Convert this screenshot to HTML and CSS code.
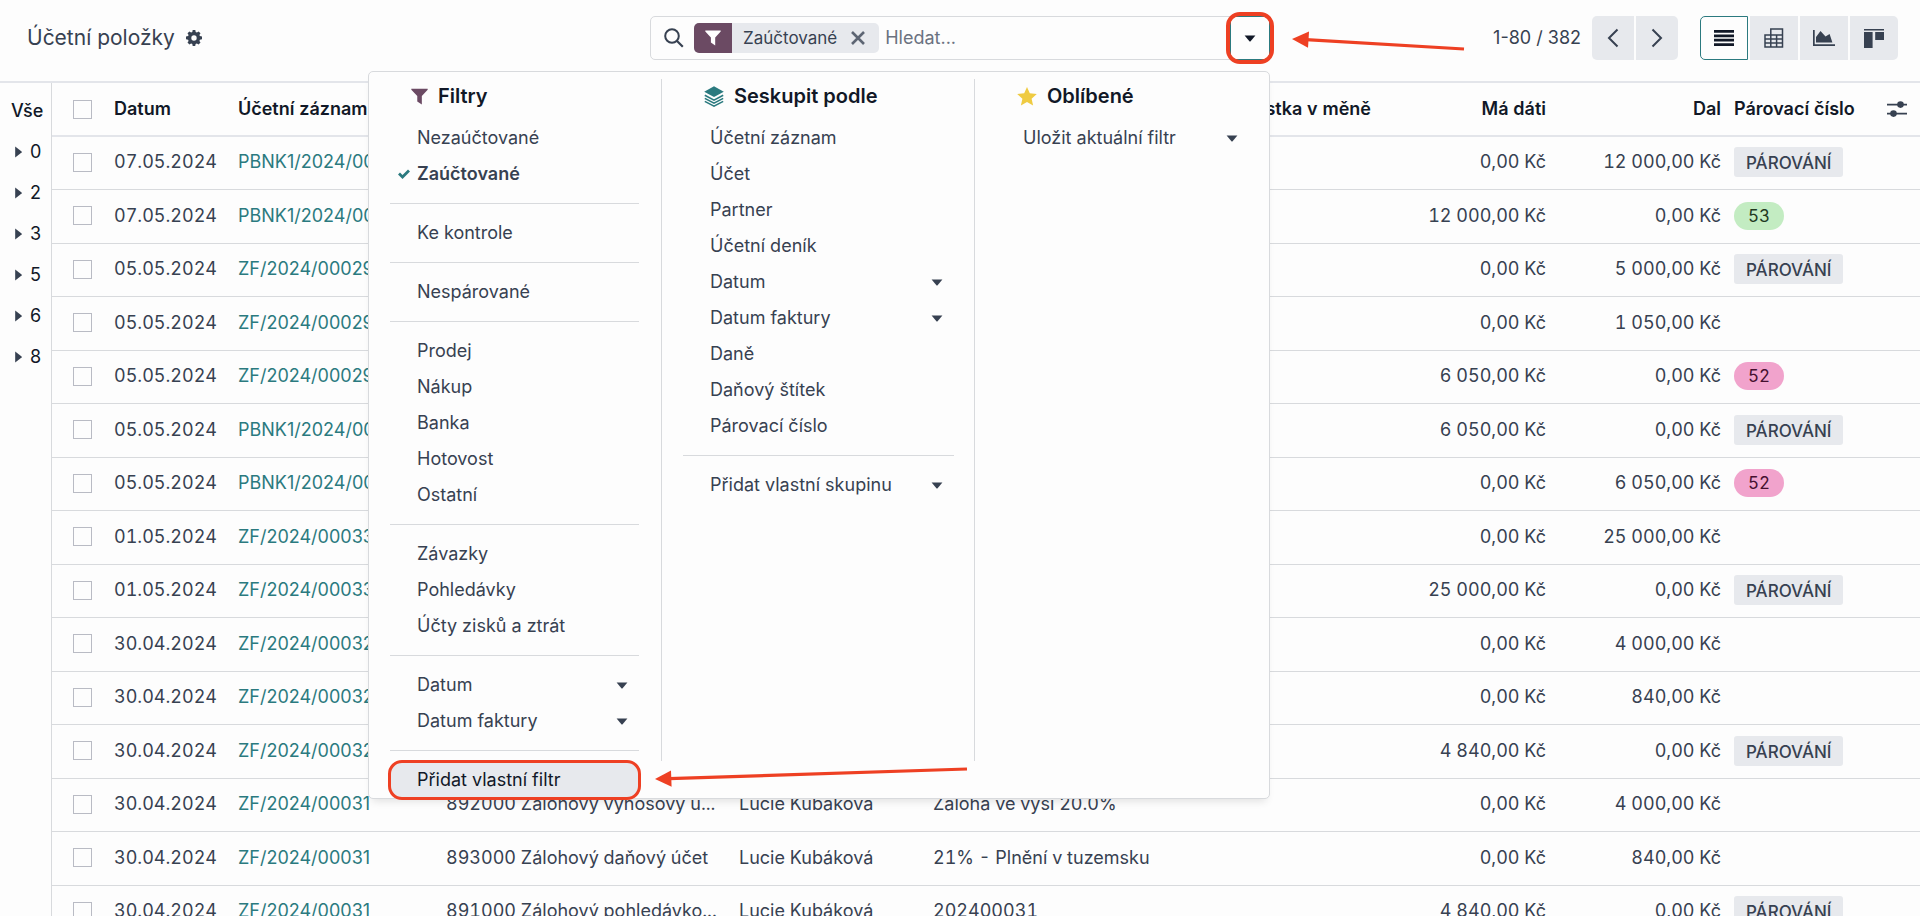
FILE: index.html
```html
<!DOCTYPE html>
<html lang="cs">
<head>
<meta charset="utf-8">
<title>Účetní položky</title>
<link rel="stylesheet" href="styles.css">
</head>
<body>
<svg class="sprite" aria-hidden="true">
  <symbol id="funnel" viewBox="0 0 16 16"><path d="M0.3 0.6H15.7V1.6L10.2 7.6V15.6L5.9 12.6V7.6L0.3 1.6Z" fill="currentColor"/></symbol>
  <symbol id="caret" viewBox="0 0 12 7"><path d="M0.6 0.4H11.4L6.6 6.2Q6 6.8 5.4 6.2Z" fill="currentColor"/></symbol>
  <symbol id="side-caret" viewBox="0 0 7 12"><path d="M0.2 0.4 6.6 5.6Q7 6 6.6 6.4L0.2 11.6Z" fill="currentColor"/></symbol>
</svg>
<header class="control-panel">
  <div class="title">
    <h1>Účetní položky</h1>
    <button class="plain" aria-label="Akce"><svg width="16" height="16" viewBox="0 0 16 16"><path fill="currentColor" fill-rule="evenodd" d="M6.7 0h2.6l.4 2 1.2.5L12.6 1.4l1.9 1.9-1.1 1.7.5 1.1 2.1.4v2.8l-2.1.4-.5 1.2 1.1 1.7-1.9 1.9-1.7-1.1-1.3.5-.4 2.1H6.7l-.4-2.1-1.2-.5-1.7 1.1-1.9-1.9 1.1-1.7-.5-1.2L0 9.3V6.5l2.1-.4.5-1.1-1.1-1.7 1.9-1.9 1.7 1.1L6.3 2ZM8 5.3a2.7 2.7 0 1 0 0 5.4 2.7 2.7 0 0 0 0-5.4Z"/></svg></button>
  </div>
  <div class="search-wrap">
    <div class="search">
      <svg class="magnifier" width="20" height="20" viewBox="0 0 20 20" fill="none" stroke="currentColor" stroke-width="2"><circle cx="8" cy="8" r="6.8"/><path d="M12.8 12.8 18.8 18.8" stroke-width="2.2"/></svg>
      <div class="facet">
        <span class="facet-icon"><svg width="16" height="16"><use href="#funnel"/></svg></span>
        <span class="facet-label">Zaúčtované</span>
        <button class="plain facet-remove" aria-label="Odstranit"><svg width="14" height="14" viewBox="0 0 14 14" stroke="currentColor" stroke-width="2.6"><path d="M1 1 13 13M13 1 1 13"/></svg></button>
      </div>
      <input type="text" placeholder="Hledat..." aria-label="Hledat">
      <button class="search-toggle" aria-label="Možnosti hledání" aria-expanded="true"><svg width="12" height="7"><use href="#caret"/></svg></button>
    </div>
    <svg class="arrow arrow-toggle" width="174" height="20" viewBox="0 0 174 20"><path d="M14 8.6 172 18" stroke="#ee4023" stroke-width="3.2"/><path d="M0 8 17 0.4 16 16.8Z" fill="#ee4023"/></svg>

    <div class="menu">
      <section class="menu-col">
        <h2><svg class="purple" width="17" height="17"><use href="#funnel"/></svg>Filtry</h2>
        <button class="item">Nezaúčtované</button>
        <button class="item selected"><svg class="check" width="12" height="10" viewBox="0 0 12 10" fill="none" stroke="currentColor" stroke-width="2.8"><path d="M1 4.6 4.5 8 11 1.4"/></svg>Zaúčtované</button>
        <hr>
        <button class="item">Ke kontrole</button>
        <hr>
        <button class="item">Nespárované</button>
        <hr>
        <button class="item">Prodej</button>
        <button class="item">Nákup</button>
        <button class="item">Banka</button>
        <button class="item">Hotovost</button>
        <button class="item">Ostatní</button>
        <hr>
        <button class="item">Závazky</button>
        <button class="item">Pohledávky</button>
        <button class="item">Účty zisků a ztrát</button>
        <hr>
        <button class="item">Datum<svg width="12" height="7"><use href="#caret"/></svg></button>
        <button class="item">Datum faktury<svg width="12" height="7"><use href="#caret"/></svg></button>
        <hr>
        <button class="item highlighted">Přidat vlastní filtr</button>
        <svg class="arrow arrow-filter" width="314" height="22" viewBox="0 0 314 22"><path d="M14 12.6 312 3" stroke="#ee4023" stroke-width="3.2"/><path d="M0 13 16 4.4 16.6 20.8Z" fill="#ee4023"/></svg>
      </section>
      <section class="menu-col">
        <h2><svg class="teal" width="20" height="21" viewBox="0 0 20 21"><path d="M10 0.3 19.8 5.7 10 11.1 0.2 5.7Z" fill="currentColor"/><path d="M0.8 9.2 10 14.2 19.2 9.2M0.8 12.4 10 17.2 19.2 12.4M0.8 15.4 10 20.1 19.2 15.4" fill="none" stroke="currentColor" stroke-width="1.6"/></svg>Seskupit podle</h2>
        <button class="item">Účetní záznam</button>
        <button class="item">Účet</button>
        <button class="item">Partner</button>
        <button class="item">Účetní deník</button>
        <button class="item">Datum<svg width="12" height="7"><use href="#caret"/></svg></button>
        <button class="item">Datum faktury<svg width="12" height="7"><use href="#caret"/></svg></button>
        <button class="item">Daně</button>
        <button class="item">Daňový štítek</button>
        <button class="item">Párovací číslo</button>
        <hr>
        <button class="item">Přidat vlastní skupinu<svg width="12" height="7"><use href="#caret"/></svg></button>
      </section>
      <section class="menu-col">
        <h2><svg class="gold" width="20" height="19" viewBox="0 0 20 19"><path d="M10 0 12.8 6.3 19.8 7.1 14.6 11.7 16.1 18.6 10 15.1 3.9 18.6 5.4 11.7 0.2 7.1 7.2 6.3Z" fill="currentColor"/></svg>Oblíbené</h2>
        <button class="item">Uložit aktuální filtr<svg width="12" height="7"><use href="#caret"/></svg></button>
      </section>
    </div>
  </div>
  <div class="tools">
    <span class="pager-text">1-80 / 382</span>
    <div class="group pager">
      <button aria-label="Předchozí"><svg width="12" height="20" viewBox="0 0 12 20" fill="none" stroke="currentColor" stroke-width="2"><path d="M10.5 1.5 2 10 10.5 18.5"/></svg></button>
      <button aria-label="Další"><svg width="12" height="20" viewBox="0 0 12 20" fill="none" stroke="currentColor" stroke-width="2"><path d="M1.5 1.5 10 10 1.5 18.5"/></svg></button>
    </div>
    <div class="group views">
      <button class="active" aria-label="Seznam"><svg width="20" height="16" viewBox="0 0 20 16" fill="currentColor"><path d="M0 0h20v2.8H0zM0 4.4h20v2.8H0zM0 8.8h20v2.8H0zM0 13.2h20V16H0z"/></svg></button>
      <button aria-label="Pivot"><svg width="20" height="20" viewBox="0 0 20 20" fill="none" stroke="currentColor" stroke-width="1.5"><path d="M1 7H18.5V19H1ZM6.8 7V1H18.5V7M6.8 7V19M12.6 7V19M1 11H18.5M1 15H18.5"/></svg></button>
      <button aria-label="Graf"><svg width="22" height="18" viewBox="0 0 22 18" fill="currentColor"><path d="M0 1H1.7V15.3H22V17H0Z"/><path d="M3 13.6V8L7.5 2 12.5 7.6 16.6 5 19.4 13.6Z"/></svg></button>
      <button aria-label="Kanban"><svg width="20" height="19" viewBox="0 0 20 19" fill="currentColor"><path d="M0 0H20V1.4H0ZM0 3H8.6V19H0ZM11.2 3H20V11H11.2Z"/></svg></button>
    </div>
  </div>
</header>
<main class="content">
  <nav class="side">
    <button class="side-all">Vše</button>
    <button><svg width="7" height="12"><use href="#side-caret"/></svg>0</button>
    <button><svg width="7" height="12"><use href="#side-caret"/></svg>2</button>
    <button><svg width="7" height="12"><use href="#side-caret"/></svg>3</button>
    <button><svg width="7" height="12"><use href="#side-caret"/></svg>5</button>
    <button><svg width="7" height="12"><use href="#side-caret"/></svg>6</button>
    <button><svg width="7" height="12"><use href="#side-caret"/></svg>8</button>
  </nav>
  <table>
    <colgroup><col class="c-check"><col class="c-date"><col class="c-move"><col class="c-account"><col class="c-partner"><col><col class="c-amount"><col class="c-amount"><col class="c-amount"><col class="c-match"><col class="c-opt"></colgroup>
    <thead>
      <tr><th><input type="checkbox" aria-label="Vybrat vše"></th><th>Datum</th><th>Účetní záznam</th><th>Účet</th><th>Partner</th><th>Štítek</th><th class="num">Částka v měně</th><th class="num">Má dáti</th><th class="num">Dal</th><th>Párovací číslo</th><th><button class="plain options" aria-label="Sloupce"><svg width="20" height="18" viewBox="0 0 20 18" fill="currentColor"><path d="M0 3.8H20V5.4H0ZM0 12.8H20V14.4H0Z"/><circle cx="13.5" cy="4.6" r="3.3"/><circle cx="6.5" cy="13.6" r="3.3"/></svg></button></th></tr>
    </thead>
    <tbody>
      <tr><td><input type="checkbox" aria-label="Vybrat"></td><td>07.05.2024</td><td><a href="#">PBNK1/2024/00031</a></td><td></td><td></td><td></td><td></td><td class="num">0,00 Kč</td><td class="num">12 000,00 Kč</td><td><button class="match">PÁROVÁNÍ</button></td><td></td></tr>
      <tr><td><input type="checkbox" aria-label="Vybrat"></td><td>07.05.2024</td><td><a href="#">PBNK1/2024/00031</a></td><td></td><td></td><td></td><td></td><td class="num">12 000,00 Kč</td><td class="num">0,00 Kč</td><td><span class="pill green">53</span></td><td></td></tr>
      <tr><td><input type="checkbox" aria-label="Vybrat"></td><td>05.05.2024</td><td><a href="#">ZF/2024/00029</a></td><td></td><td></td><td></td><td></td><td class="num">0,00 Kč</td><td class="num">5 000,00 Kč</td><td><button class="match">PÁROVÁNÍ</button></td><td></td></tr>
      <tr><td><input type="checkbox" aria-label="Vybrat"></td><td>05.05.2024</td><td><a href="#">ZF/2024/00029</a></td><td></td><td></td><td></td><td></td><td class="num">0,00 Kč</td><td class="num">1 050,00 Kč</td><td></td><td></td></tr>
      <tr><td><input type="checkbox" aria-label="Vybrat"></td><td>05.05.2024</td><td><a href="#">ZF/2024/00029</a></td><td></td><td></td><td></td><td></td><td class="num">6 050,00 Kč</td><td class="num">0,00 Kč</td><td><span class="pill pink">52</span></td><td></td></tr>
      <tr><td><input type="checkbox" aria-label="Vybrat"></td><td>05.05.2024</td><td><a href="#">PBNK1/2024/00030</a></td><td></td><td></td><td></td><td></td><td class="num">6 050,00 Kč</td><td class="num">0,00 Kč</td><td><button class="match">PÁROVÁNÍ</button></td><td></td></tr>
      <tr><td><input type="checkbox" aria-label="Vybrat"></td><td>05.05.2024</td><td><a href="#">PBNK1/2024/00030</a></td><td></td><td></td><td></td><td></td><td class="num">0,00 Kč</td><td class="num">6 050,00 Kč</td><td><span class="pill pink">52</span></td><td></td></tr>
      <tr><td><input type="checkbox" aria-label="Vybrat"></td><td>01.05.2024</td><td><a href="#">ZF/2024/00033</a></td><td></td><td></td><td></td><td></td><td class="num">0,00 Kč</td><td class="num">25 000,00 Kč</td><td></td><td></td></tr>
      <tr><td><input type="checkbox" aria-label="Vybrat"></td><td>01.05.2024</td><td><a href="#">ZF/2024/00033</a></td><td></td><td></td><td></td><td></td><td class="num">25 000,00 Kč</td><td class="num">0,00 Kč</td><td><button class="match">PÁROVÁNÍ</button></td><td></td></tr>
      <tr><td><input type="checkbox" aria-label="Vybrat"></td><td>30.04.2024</td><td><a href="#">ZF/2024/00032</a></td><td></td><td></td><td></td><td></td><td class="num">0,00 Kč</td><td class="num">4 000,00 Kč</td><td></td><td></td></tr>
      <tr><td><input type="checkbox" aria-label="Vybrat"></td><td>30.04.2024</td><td><a href="#">ZF/2024/00032</a></td><td></td><td></td><td></td><td></td><td class="num">0,00 Kč</td><td class="num">840,00 Kč</td><td></td><td></td></tr>
      <tr><td><input type="checkbox" aria-label="Vybrat"></td><td>30.04.2024</td><td><a href="#">ZF/2024/00032</a></td><td></td><td></td><td></td><td></td><td class="num">4 840,00 Kč</td><td class="num">0,00 Kč</td><td><button class="match">PÁROVÁNÍ</button></td><td></td></tr>
      <tr><td><input type="checkbox" aria-label="Vybrat"></td><td>30.04.2024</td><td><a href="#">ZF/2024/00031</a></td><td>892000 Zálohový výnosový ú...</td><td>Lucie Kubáková</td><td>Záloha ve výši 20.0%</td><td></td><td class="num">0,00 Kč</td><td class="num">4 000,00 Kč</td><td></td><td></td></tr>
      <tr><td><input type="checkbox" aria-label="Vybrat"></td><td>30.04.2024</td><td><a href="#">ZF/2024/00031</a></td><td>893000 Zálohový daňový účet</td><td>Lucie Kubáková</td><td>21% - Plnění v tuzemsku</td><td></td><td class="num">0,00 Kč</td><td class="num">840,00 Kč</td><td></td><td></td></tr>
      <tr><td><input type="checkbox" aria-label="Vybrat"></td><td>30.04.2024</td><td><a href="#">ZF/2024/00031</a></td><td>891000 Zálohový pohledávko...</td><td>Lucie Kubáková</td><td>202400031</td><td></td><td class="num">4 840,00 Kč</td><td class="num">0,00 Kč</td><td><button class="match">PÁROVÁNÍ</button></td><td></td></tr>
    </tbody>
  </table>
</main>
</body>
</html>
```
FILE: styles.css
```css
* { box-sizing: border-box; }
html, body { height: 100%; }
body {
  margin: 0;
  display: flex;
  flex-direction: column;
  overflow: hidden;
  background: #fdfdfd;
  color: #374151;
  font: 18px/24px Inter, "Liberation Sans", sans-serif;
}
button, input { font: inherit; color: inherit; }
button { border: 0; padding: 0; background: none; cursor: pointer; }
svg { display: block; flex: none; }
.sprite { position: absolute; width: 0; height: 0; }
.plain { display: flex; }

/* Control panel */
.control-panel {
  display: grid;
  grid-template-columns: 1fr 620px 1fr;
  align-items: start;
  padding: 16px 22px 21px;
  border-bottom: 2px solid #e3e5ea;
}
.title { display: flex; align-items: center; gap: 11px; height: 44px; padding-left: 5px; }
h1 { margin: 0; font-size: 21px; line-height: 28px; font-weight: 400; }
.search-wrap { position: relative; z-index: 2; }
.search {
  display: flex;
  align-items: center;
  height: 44px;
  padding-left: 13px;
  border: 1px solid #d8dadd;
  border-radius: 5px;
}
.magnifier { margin-right: 10px; }
.facet { display: flex; align-items: center; height: 30px; border-radius: 5px; overflow: hidden; background: #e7e9ed; }
.facet-icon { display: flex; align-items: center; justify-content: center; width: 38px; height: 30px; background: #6b4a63; color: #fff; }
.facet-label { padding: 0 14px 0 11px; font-size: 17px; }
.facet-remove { margin-right: 14px; color: #5d6573; }
.search input { flex: 1; min-width: 0; margin-left: 6px; padding: 0; border: 0; outline: 0; background: none; }
.search input::placeholder { color: #6b7280; opacity: 1; }
.search-toggle {
  position: relative;
  display: flex;
  align-items: center;
  justify-content: center;
  align-self: stretch;
  width: 40px;
  margin: -1px;
  border: 1px solid #2b7a7f;
  border-radius: 0 5px 5px 0;
  color: #111827;
}
.search-toggle::after {
  content: "";
  position: absolute;
  inset: -5px;
  border: 4px solid #ee4023;
  border-radius: 14px;
}
.arrow { position: absolute; }
.arrow-toggle { left: 642px; top: 15px; }

/* Search menu */
.menu {
  position: absolute;
  top: 55px;
  right: 0;
  width: 902px;
  display: grid;
  grid-template-columns: 292px 313px 1fr;
  background: #fdfdfd;
  border: 1px solid #d8dadd;
  border-radius: 5px;
  box-shadow: 0 6px 8px -4px rgba(0, 0, 0, 0.12);
}
.menu-col { position: relative; padding: 8px 22px 0 21px; }
.menu-col + .menu-col { padding: 8px 20px 0 22px; }
.menu-col + .menu-col::before {
  content: "";
  position: absolute;
  left: 0;
  top: 7px;
  bottom: 37px;
  border-left: 1px solid #d8dadd;
}
h2 {
  display: flex;
  align-items: center;
  gap: 10px;
  height: 32px;
  margin: 0 0 8px;
  padding-left: 21px;
  color: #111827;
  font-size: 20px;
  font-weight: 600;
}
.purple { color: #6b4a63; }
.teal { color: #2b7a7f; }
.gold { color: #efcb42; }
.item {
  position: relative;
  display: flex;
  align-items: center;
  justify-content: space-between;
  width: 100%;
  height: 36px;
  padding: 0 11px 0 27px;
  text-align: left;
  white-space: nowrap;
}
.item.selected { font-weight: 600; }
.check { position: absolute; left: 8px; color: #2b7a7f; }
.item.highlighted { background: #e7e9ed; color: #111827; border-radius: 12px; }
.item.highlighted::after {
  content: "";
  position: absolute;
  inset: -2px;
  border: 3px solid #ee4023;
  border-radius: 14px;
}
.arrow-filter { left: 286px; bottom: 10px; z-index: 1; }
hr { height: 1px; margin: 11px 0; border: 0; background: #d8dadd; }

/* Pager and view switcher */
.tools { display: flex; align-items: center; justify-content: flex-end; height: 44px; }
.pager-text { margin-right: 11px; }
.group { display: flex; gap: 2px; }
.group button { display: flex; align-items: center; justify-content: center; height: 44px; background: #e7e9ed; }
.group button:first-child { border-radius: 5px 0 0 5px; }
.group button:last-child { border-radius: 0 5px 5px 0; }
.pager { margin-right: 22px; }
.pager button { width: 42px; }
.views button { width: 48px; }
.views .active { background: #fdfdfd; border: 1px solid #2b7a7f; color: #111827; }

/* Content */
.content { flex: 1; min-height: 0; display: flex; overflow: hidden; }
.side { width: 52px; flex: none; border-right: 1px solid #d8dadd; padding-top: 7px; color: #111827; }
.side button { display: flex; align-items: center; gap: 8px; height: 41px; padding-left: 15px; }
.side .side-all { padding-left: 11px; font-weight: 500; }
.side svg { color: #374151; }
table {
  flex: 1;
  align-self: flex-start;
  width: 100%;
  table-layout: fixed;
  border-collapse: separate;
  border-spacing: 0;
  font-variant-numeric: tabular-nums;
}
.c-check { width: 55px; }
.c-date { width: 124px; }
.c-move { width: 208px; }
.c-account { width: 293px; }
.c-partner { width: 194px; }
.c-amount { width: 175px; }
.c-match { width: 153px; }
.c-opt { width: 40px; }
th, td {
  height: 53px;
  padding: 0 7px 2px;
  border-bottom: 1px solid #d8dadd;
  text-align: left;
  white-space: nowrap;
}
th { height: 54px; border-bottom: 2px solid #e3e5ea; color: #111827; font-weight: 600; padding-bottom: 0; }
tbody tr:nth-child(even) td { height: 54px; }
th:first-child, td:first-child { padding-left: 21px; }
th.num, td.num { text-align: right; padding-right: 6px; }
a { color: #2b7a7f; text-decoration: none; font-variant-numeric: normal; }
.options { color: #374151; }
input[type="checkbox"] {
  appearance: none;
  display: block;
  width: 19px;
  height: 19px;
  margin: 0;
  border: 1px solid #b9bbc4;
}
.match { display: block; height: 30px; padding: 2px 12px 0; background: #e7e9ed; border-radius: 3px; font-size: 17px; font-weight: 500; }
.pill { display: block; width: 50px; height: 28px; border-radius: 14px; line-height: 28px; font-size: 17px; text-align: center; }
.green { background: #c3ecc2; color: #21391f; }
.pink { background: #f1a3cc; color: #45102f; }
```
